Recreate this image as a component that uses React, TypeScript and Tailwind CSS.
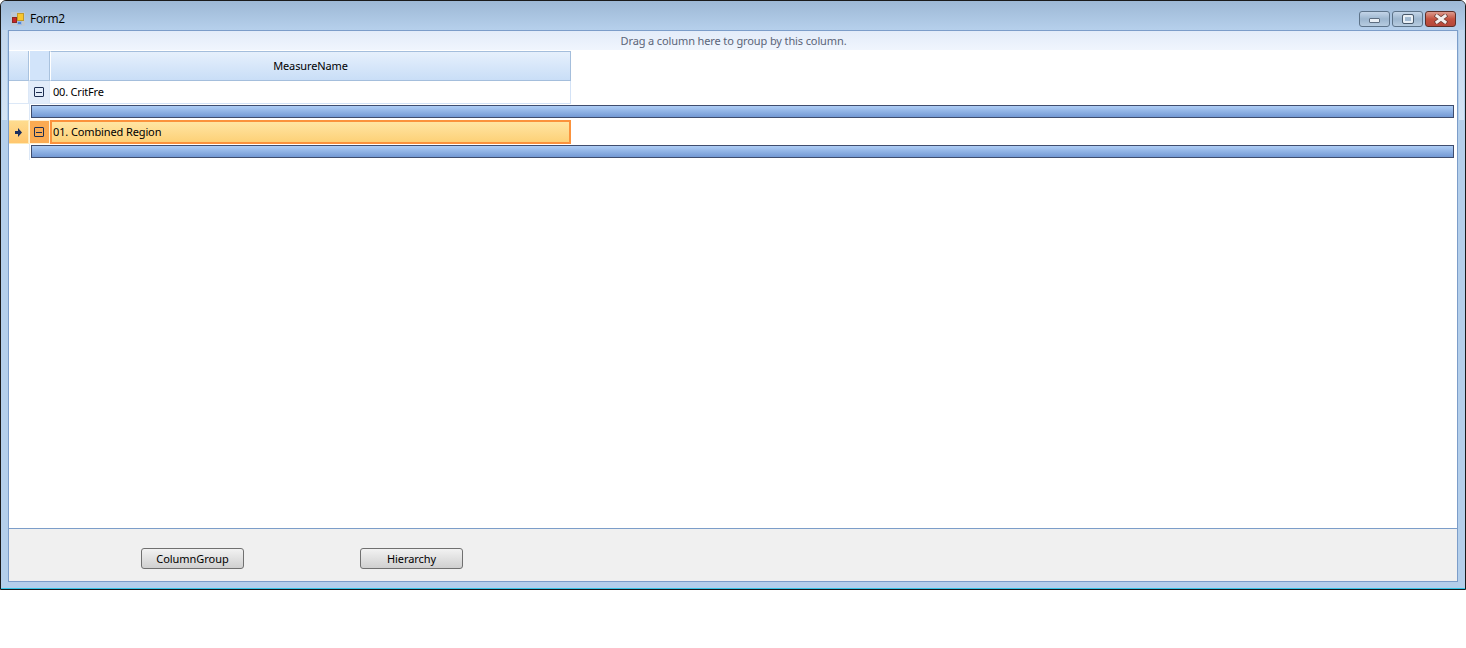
function AppIcon() {
  return (
    <svg width="14" height="14" viewBox="0 0 14 14" className="shrink-0">
      <rect x="0" y="0" width="14" height="14" fill="#bcc8d6" rx="1" />
      <rect x="1.5" y="5.5" width="4" height="5" fill="#c8242a" stroke="#8a2a22" />
      <rect x="6.5" y="1.5" width="6" height="7" fill="#f7c62f" stroke="#c09a2c" />
      <rect x="6.5" y="9.5" width="4" height="3" fill="#4f86dc" stroke="#9fbbe0" />
    </svg>
  )
}

function ExpandBox() {
  return (
    <span className="flex h-[10px] w-[10px] items-center justify-center rounded-[1px] border border-[#1e2f52]">
      <span className="h-px w-[6px] bg-[#1e2f52]" />
    </span>
  )
}

function DetailRow() {
  return (
    <div className="flex h-4 items-stretch">
      <div className="w-[21px] shrink-0 border-r border-[#dce8f7]" />
      <div className="mb-[2px] ml-[1px] mr-[3px] mt-px flex-1 border border-[#3f4d6e] bg-gradient-to-b from-[#aecdf5] to-[#7399d4]" />
    </div>
  )
}

function Button({ label, className }: { label: string; className: string }) {
  return (
    <button className={`flex h-[21px] w-[103px] items-center justify-center rounded-[3px] border border-[#707070] bg-gradient-to-b from-[#f2f2f2] to-[#d0d0d0] pt-px text-[11px] tracking-[-0.05px] text-black ${className}`}>
      {label}
    </button>
  )
}

function SideFrame() {
  return (
    <div className="w-[7px] shrink-0 px-[1px]">
      <div className="h-[90px] w-full bg-gradient-to-b from-[#c3d7ed] to-[#d4e4f5]" />
    </div>
  )
}

export default function App() {
  return (
    <div className="h-[648px] w-[1466px] bg-white font-['Noto_Sans',sans-serif]">
      <div className="flex h-[590px] w-[1466px] flex-col rounded-t-[6px] border border-[#1a1a1a] bg-[#b4cfeb]">
        {/* title bar */}
        <div className="flex h-[29px] shrink-0 items-start justify-between rounded-t-[5px] bg-gradient-to-b from-[#9db8d5] to-[#b6d0ec] pl-[10px] pr-[9px] pt-[10px]">
          <div className="flex h-[16px] items-center gap-[5px]">
            <AppIcon />
            <span className="font-['Open_Sans',sans-serif] text-[12px] tracking-[-0.3px] text-black">Form2</span>
          </div>
          <div className="flex gap-[2px]">
            <div className="flex h-[16px] w-[31px] items-end justify-center rounded-[3px] border border-[#5d7389] bg-gradient-to-b from-[#c3d5e8] via-[#9db6cf] to-[#b7cce0] pb-[3px]">
              <span className="h-[5px] w-[11px] rounded-[1px] border border-[#5d6d80] bg-[#e9eff5]" />
            </div>
            <div className="flex h-[16px] w-[31px] items-center justify-center rounded-[3px] border border-[#5d7389] bg-gradient-to-b from-[#c3d5e8] via-[#9db6cf] to-[#b7cce0]">
              <span className="h-[8px] w-[10px] rounded-[1px] border-2 border-[#e9eff5] outline outline-1 outline-[#49596b]" />
            </div>
            <div className="flex h-[16px] w-[31px] items-center justify-center rounded-[3px] border border-[#5e2e28] bg-gradient-to-b from-[#dc9a8e] via-[#c3513f] to-[#b5473a]">
              <svg width="14" height="10" viewBox="0 0 14 10">
                <path d="M3 2 L11 8 M11 2 L3 8" stroke="#6a3a32" strokeWidth="4.4" strokeLinecap="square" />
                <path d="M3 2 L11 8 M11 2 L3 8" stroke="#f4efee" strokeWidth="3" strokeLinecap="square" />
              </svg>
            </div>
          </div>
        </div>

        <div className="flex h-[553px]">
          <SideFrame />
          {/* client area */}
          <div className="flex flex-1 flex-col border border-[#7c9dc9] bg-white">
            <div className="flex h-[19px] shrink-0 items-center justify-center bg-gradient-to-b from-[#e3ecf9] to-[#f0f5fd] pl-px pt-px text-[11px] tracking-[-0.12px] text-[#5b6478]">
              Drag a column here to group by this column.
            </div>

            <div className="flex-1 pt-px text-[11px] tracking-[-0.12px] text-black">
              {/* header */}
              <div className="flex h-[30px]">
                <div className="w-[20px] border-b border-r border-[#a9c2de] bg-gradient-to-b from-[#e6f0fc] to-[#c9def7]" />
                <div className="w-[21px] border-b border-l border-r border-[#a9c2de] border-l-white bg-[#d2e4fa]" />
                <div className="flex w-[521px] items-center justify-center border border-[#a4bedc] border-l-white bg-gradient-to-b from-[#e6f0fc] to-[#c9def7]">
                  MeasureName
                </div>
              </div>

              {/* row 00 */}
              <div className="flex h-[23px]">
                <div className="w-[20px] border-b border-r border-[#dce8f7]" />
                <div className="flex w-[21px] items-center justify-center border-b border-r border-[#dce8f7] bg-[#e2ecfa]">
                  <ExpandBox />
                </div>
                <div className="flex w-[521px] items-center border-b border-r border-[#d3e2f6] pl-[3px] tracking-[-0.2px]">00. CritFre</div>
              </div>
              <DetailRow />

              {/* row 01, selected */}
              <div className="flex h-[24px]">
                <div className="flex w-[20px] items-center justify-center border-y border-r border-[#fdeab8] bg-gradient-to-b from-[#fedc8f] to-[#ffc66e]">
                  <svg width="7" height="9" viewBox="0 0 7 9">
                    <path d="M3 0 L7 4.5 L3 9 L3 6 L0 6 L0 3 L3 3 Z" fill="#1c2f5e" />
                  </svg>
                </div>
                <div className="flex w-[21px] items-center justify-center border border-[#fff2d6] bg-[#fbab52] pr-[2px]">
                  <ExpandBox />
                </div>
                <div className="flex w-[521px] items-center border-2 border-[#fb923c] bg-gradient-to-b from-[#ffe5a3] to-[#fdd177] pl-px">
                  01. Combined Region
                </div>
              </div>
              <DetailRow />
            </div>

            {/* bottom panel */}
            <div className="flex h-[53px] shrink-0 items-start border-t border-[#7c9dc9] bg-[#f0f0f0] pl-[132px] pt-[19px]">
              <Button label="ColumnGroup" className="" />
              <Button label="Hierarchy" className="ml-[116px]" />
            </div>
          </div>
          <SideFrame />
        </div>
        <div className="mt-[6px] h-px shrink-0 bg-[#35c4e6]" />
      </div>
    </div>
  )
}
